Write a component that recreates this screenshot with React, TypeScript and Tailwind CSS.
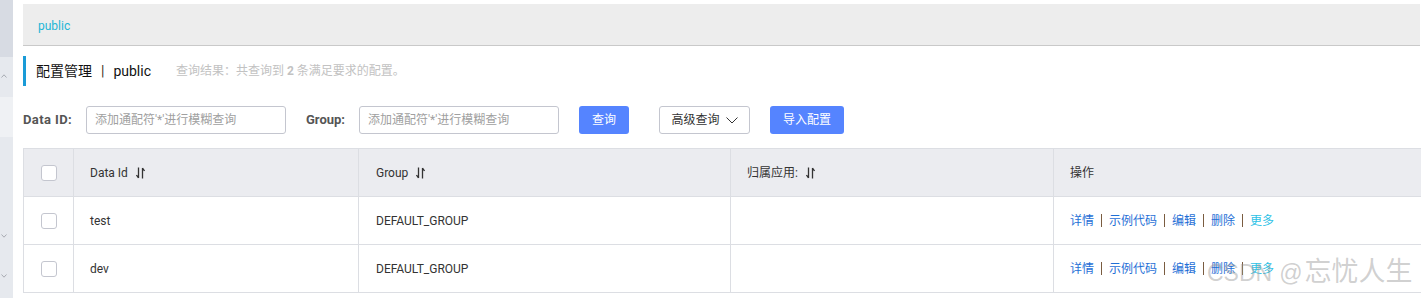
import React from 'react';

const font = "font-['Roboto','Noto_Sans_CJK_SC',sans-serif]";

function SortIcon() {
  return (
    <svg width="9" height="12" viewBox="0 0 9 12" className="ml-[8px] inline-block">
      <path d="M2.5 0.5 V11 M2.5 11 L0.5 8" stroke="#333" strokeWidth="1.3" fill="none" />
      <path d="M6.5 11.5 V1 M6.5 1 L8.5 4" stroke="#333" strokeWidth="1.3" fill="none" />
    </svg>
  );
}

function Checkbox() {
  return <div className="w-[16px] h-[16px] rounded-[3px] border border-[#c4c6cf] bg-white" />;
}

function Chevron({ up }: { up?: boolean }) {
  return (
    <svg width="6" height="4" viewBox="0 0 6 4" className="ml-[1px]">
      <path d={up ? 'M0.5 3.5 L3 0.8 L5.5 3.5' : 'M0.5 0.5 L3 3.2 L5.5 0.5'} stroke="#a0a4ab" strokeWidth="0.9" fill="none" />
    </svg>
  );
}

function Sep() {
  return <span className="inline-block w-px h-[13px] bg-[#7a5c40] mx-[7px]" />;
}

function Actions() {
  return (
    <div className="flex items-center text-[12px] text-[#1f6fd6]">
      <span>详情</span>
      <Sep />
      <span>示例代码</span>
      <Sep />
      <span>编辑</span>
      <Sep />
      <span>删除</span>
      <Sep />
      <span className="text-[#2ec2e6]">更多</span>
    </div>
  );
}

const cols = 'grid grid-cols-[49px_285px_372px_323px_1fr]';

export default function App() {
  const rows = [
    { id: 'test', group: 'DEFAULT_GROUP' },
    { id: 'dev', group: 'DEFAULT_GROUP' },
  ];

  return (
    <div className={`relative flex w-[1421px] h-[300px] bg-white overflow-hidden ${font}`}>
      {/* left nav strip */}
      <div className="w-[13px] flex flex-col">
        <div className="h-[57px] bg-[#d7dbe3]" />
        <div className="h-[40px] bg-[#e6e9ee] flex items-center pb-[2px]">
          <Chevron up />
        </div>
        <div className="h-[40px] bg-[#eff1f4]" />
        <div className="flex-1 bg-[#e6e9ee] flex flex-col pt-[97px] gap-[36px]">
          <Chevron />
          <Chevron />
        </div>
        <div className="h-[2px] bg-white" />
      </div>

      <div className="flex-1 ml-[10px] flex flex-col pt-[4px] min-w-0">
        {/* breadcrumb bar */}
        <div className="h-[42px] bg-[#ededed] border-b border-[#c9c9c9] flex items-center pl-[15px] pt-[3px] mr-px">
          <span className="text-[12px] text-[#23b6d6]">public</span>
        </div>

        {/* title */}
        <div className="mt-[10px] h-[30px] flex items-center border-l-[3px] border-[#1a9bd7]">
          <span className="ml-[10px] text-[14px] text-[#111]">配置管理</span>
          <span className="mx-[9px] text-[14px] text-[#3a2a1a]">|</span>
          <span className="text-[14px] text-[#111]">public</span>
          <span className="ml-[25px] text-[12px] text-[#c2c2c2]">
            查询结果：共查询到 <b className="font-bold">2</b> 条满足要求的配置。
          </span>
        </div>

        {/* search */}
        <div className="mt-[20px] h-[28px] flex items-center">
          <span className="w-[50px] text-[13px] font-bold text-[#555] tracking-[0.4px]">Data ID:</span>
          <div className="ml-[13px] w-[200px] h-[28px] border border-[#c4c6cf] rounded-[3px] flex items-center px-[8px] text-[12px] text-[#a0a0a0]">
            添加通配符'*'进行模糊查询
          </div>
          <span className="ml-[20px] w-[40px] text-[13px] font-bold text-[#555]">Group:</span>
          <div className="ml-[13px] w-[200px] h-[28px] border border-[#c4c6cf] rounded-[3px] flex items-center px-[8px] text-[12px] text-[#a0a0a0]">
            添加通配符'*'进行模糊查询
          </div>
          <div className="ml-[20px] w-[50px] h-[28px] rounded-[3px] bg-[#5584ff] text-white text-[12px] flex items-center justify-center">
            查询
          </div>
          <div className="ml-[30px] w-[91px] h-[28px] rounded-[3px] border border-[#c4c6cf] bg-white text-[#333] text-[12px] flex items-center justify-center gap-[6px]">
            高级查询
            <svg width="12" height="7" viewBox="0 0 12 7">
              <path d="M0.5 0.5 L6 6 L11.5 0.5" stroke="#333" strokeWidth="1" fill="none" />
            </svg>
          </div>
          <div className="ml-[20px] w-[74px] h-[28px] rounded-[3px] bg-[#5584ff] text-white text-[12px] flex items-center justify-center">
            导入配置
          </div>
        </div>

        {/* table */}
        <div className="mt-[14px] border-t border-l border-[#dcdee3] text-[12px] text-[#333]">
          <div className={`${cols} h-[48px] bg-[#ebecf0] border-b border-[#dcdee3]`}>
            <div className="flex items-center justify-center">
              <Checkbox />
            </div>
            <div className="flex items-center pl-[16px] border-l border-[#dcdee3]">
              Data Id
              <SortIcon />
            </div>
            <div className="flex items-center pl-[17px] border-l border-[#dcdee3]">
              Group
              <SortIcon />
            </div>
            <div className="flex items-center pl-[16px] border-l border-[#dcdee3]">
              归属应用:
              <SortIcon />
            </div>
            <div className="flex items-center pl-[16px] border-l border-[#dcdee3]">操作</div>
          </div>
          {rows.map((r) => (
            <div key={r.id} className={`${cols} h-[48px] border-b border-[#dcdee3]`}>
              <div className="flex items-center justify-center">
                <Checkbox />
              </div>
              <div className="flex items-center pl-[16px] border-l border-[#dcdee3]">{r.id}</div>
              <div className="flex items-center pl-[17px] border-l border-[#dcdee3]">{r.group}</div>
              <div className="border-l border-[#dcdee3]" />
              <div className="flex items-center pl-[16px] border-l border-[#dcdee3]">
                <Actions />
              </div>
            </div>
          ))}
        </div>
      </div>

      {/* watermark */}
      <div className="absolute left-[1207px] top-[255px] flex items-baseline whitespace-nowrap text-[rgba(150,150,150,0.45)] font-['Liberation_Sans','Noto_Sans_CJK_SC',sans-serif] leading-[34px]">
        <span className="text-[23px]">CSDN</span>
        <span className="text-[23px] ml-[7px]">@</span>
        <span className="text-[27px] ml-[2px]">忘忧人生</span>
      </div>
    </div>
  );
}
